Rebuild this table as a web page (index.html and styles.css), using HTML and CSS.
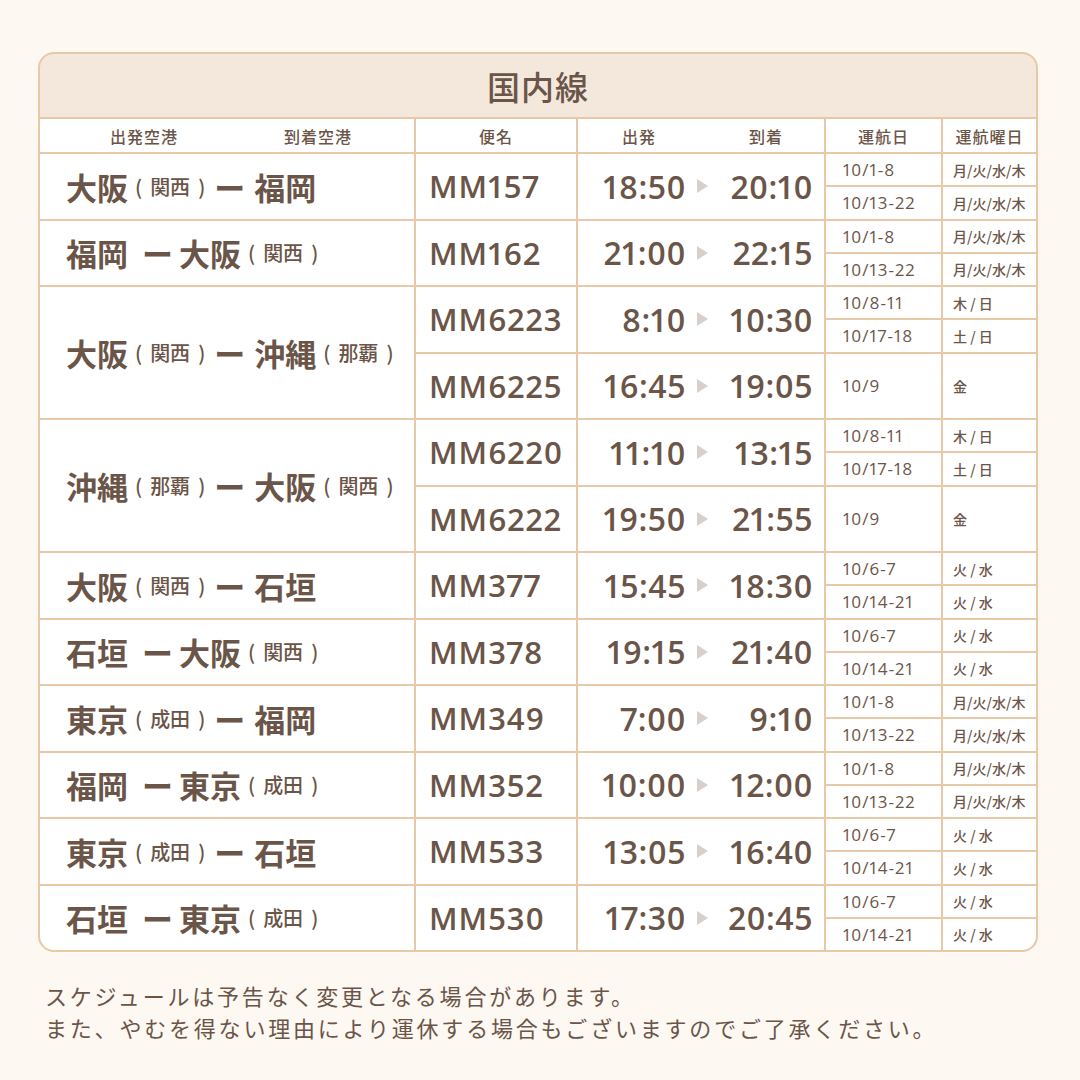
FILE: index.html
```html
<!DOCTYPE html>
<html lang="ja">
<head>
<meta charset="utf-8">
<title>国内線</title>
<link rel="stylesheet" href="styles.css">
</head>
<body>
<div class="page">
  <div class="board">
    <div class="title">国内線</div>
    <div class="grid">
      <div class="cell h h-route"><span>出発空港</span><span>到着空港</span></div>
      <div class="cell h">便名</div>
      <div class="cell h h-time"><span>出発</span><span>到着</span></div>
      <div class="cell h">運航日</div>
      <div class="cell h">運航曜日</div>

      <!-- 1 -->
      <div class="cell route">大阪<span class="sub">(<span class="kw">関西</span>)</span><span class="dash">ー</span>福岡</div>
      <div class="cell flt">MM157</div>
      <div class="cell time"><span class="dep">18:50</span><span class="tri"></span><span class="arr">20:10</span></div>
      <div class="cell date">10/1-8</div><div class="cell days">月/火/水/木</div>
      <div class="cell date">10/13-22</div><div class="cell days">月/火/水/木</div>

      <!-- 2 -->
      <div class="cell route">福岡<span class="dash">ー</span>大阪<span class="sub">(<span class="kw">関西</span>)</span></div>
      <div class="cell flt">MM162</div>
      <div class="cell time"><span class="dep">21:00</span><span class="tri"></span><span class="arr">22:15</span></div>
      <div class="cell date">10/1-8</div><div class="cell days">月/火/水/木</div>
      <div class="cell date">10/13-22</div><div class="cell days">月/火/水/木</div>

      <!-- 3 -->
      <div class="cell route tall">大阪<span class="sub">(<span class="kw">関西</span>)</span><span class="dash">ー</span>沖縄<span class="sub">(<span class="kw">那覇</span>)</span></div>
      <div class="cell flt">MM6223</div>
      <div class="cell time"><span class="dep">8:10</span><span class="tri"></span><span class="arr">10:30</span></div>
      <div class="cell date">10/8-11</div><div class="cell days">木 / 日</div>
      <div class="cell date">10/17-18</div><div class="cell days">土 / 日</div>
      <div class="cell flt">MM6225</div>
      <div class="cell time"><span class="dep">16:45</span><span class="tri"></span><span class="arr">19:05</span></div>
      <div class="cell date two">10/9</div><div class="cell days two">金</div>

      <!-- 4 -->
      <div class="cell route tall">沖縄<span class="sub">(<span class="kw">那覇</span>)</span><span class="dash">ー</span>大阪<span class="sub">(<span class="kw">関西</span>)</span></div>
      <div class="cell flt">MM6220</div>
      <div class="cell time"><span class="dep">11:10</span><span class="tri"></span><span class="arr">13:15</span></div>
      <div class="cell date">10/8-11</div><div class="cell days">木 / 日</div>
      <div class="cell date">10/17-18</div><div class="cell days">土 / 日</div>
      <div class="cell flt">MM6222</div>
      <div class="cell time"><span class="dep">19:50</span><span class="tri"></span><span class="arr">21:55</span></div>
      <div class="cell date two">10/9</div><div class="cell days two">金</div>

      <!-- 5 -->
      <div class="cell route">大阪<span class="sub">(<span class="kw">関西</span>)</span><span class="dash">ー</span>石垣</div>
      <div class="cell flt">MM377</div>
      <div class="cell time"><span class="dep">15:45</span><span class="tri"></span><span class="arr">18:30</span></div>
      <div class="cell date">10/6-7</div><div class="cell days">火 / 水</div>
      <div class="cell date">10/14-21</div><div class="cell days">火 / 水</div>

      <!-- 6 -->
      <div class="cell route">石垣<span class="dash">ー</span>大阪<span class="sub">(<span class="kw">関西</span>)</span></div>
      <div class="cell flt">MM378</div>
      <div class="cell time"><span class="dep">19:15</span><span class="tri"></span><span class="arr">21:40</span></div>
      <div class="cell date">10/6-7</div><div class="cell days">火 / 水</div>
      <div class="cell date">10/14-21</div><div class="cell days">火 / 水</div>

      <!-- 7 -->
      <div class="cell route">東京<span class="sub">(<span class="kw">成田</span>)</span><span class="dash">ー</span>福岡</div>
      <div class="cell flt">MM349</div>
      <div class="cell time"><span class="dep">7:00</span><span class="tri"></span><span class="arr">9:10</span></div>
      <div class="cell date">10/1-8</div><div class="cell days">月/火/水/木</div>
      <div class="cell date">10/13-22</div><div class="cell days">月/火/水/木</div>

      <!-- 8 -->
      <div class="cell route">福岡<span class="dash">ー</span>東京<span class="sub">(<span class="kw">成田</span>)</span></div>
      <div class="cell flt">MM352</div>
      <div class="cell time"><span class="dep">10:00</span><span class="tri"></span><span class="arr">12:00</span></div>
      <div class="cell date">10/1-8</div><div class="cell days">月/火/水/木</div>
      <div class="cell date">10/13-22</div><div class="cell days">月/火/水/木</div>

      <!-- 9 -->
      <div class="cell route">東京<span class="sub">(<span class="kw">成田</span>)</span><span class="dash">ー</span>石垣</div>
      <div class="cell flt">MM533</div>
      <div class="cell time"><span class="dep">13:05</span><span class="tri"></span><span class="arr">16:40</span></div>
      <div class="cell date">10/6-7</div><div class="cell days">火 / 水</div>
      <div class="cell date">10/14-21</div><div class="cell days">火 / 水</div>

      <!-- 10 -->
      <div class="cell route">石垣<span class="dash">ー</span>東京<span class="sub">(<span class="kw">成田</span>)</span></div>
      <div class="cell flt">MM530</div>
      <div class="cell time"><span class="dep">17:30</span><span class="tri"></span><span class="arr">20:45</span></div>
      <div class="cell date">10/6-7</div><div class="cell days">火 / 水</div>
      <div class="cell date">10/14-21</div><div class="cell days">火 / 水</div>
    </div>
  </div>
  <div class="note">
    <p>スケジュールは予告なく変更となる場合があります。</p>
    <p>また、やむを得ない理由により運休する場合もございますのでご了承ください。</p>
  </div>
</div>
</body>
</html>
```

FILE: styles.css
```css
html, body {
  margin: 0;
  padding: 0;
}
body {
  background: #fdf8f2;
  color: #6b5548;
  font-family: "Noto Sans CJK JP", "Noto Sans", sans-serif;
}
.page {
  padding: 52px 0 0 38px;
}
.board {
  width: 1000px;
  box-sizing: border-box;
  border: 2px solid #e7c8a7;
  border-radius: 16px;
  overflow: hidden;
  background: #e7c8a7;
}
.title {
  height: 63px;
  background: #f4e8dd;
  border-bottom: 2px solid #e7c8a7;
  display: flex;
  align-items: center;
  justify-content: center;
  font-size: 33px;
  font-weight: 500;
  letter-spacing: 1px;
}
.grid {
  display: grid;
  grid-template-columns: 374px 160px 246px 115px 93px;
  grid-template-rows: 33px repeat(24, 1fr);
  height: 831px;
  gap: 2px;
}
.cell {
  background: #ffffff;
  display: flex;
  align-items: center;
  min-width: 0;
  white-space: nowrap;
}
.h {
  justify-content: center;
  font-size: 16px;
  font-weight: 500;
  letter-spacing: 1px;
}
.h-route {
  justify-content: space-between;
  padding: 0 62px 0 70px;
}
.h-time {
  justify-content: space-between;
  padding: 0 41px 0 44px;
}
.route {
  grid-row: span 2;
  padding-left: 26px;
  font-size: 31px;
  font-weight: 700;
}
.route.tall {
  grid-row: span 4;
}
.sub {
  font-size: 20px;
  font-weight: 500;
  margin-left: 7px;
}
.kw {
  margin: 0 8px;
}
.dash {
  margin: 0 6px 0 14px;
}
.sub + .dash {
  margin-left: 9px;
  margin-right: 9px;
}
.flt {
  grid-row: span 2;
  padding-left: 13px;
  font-family: "Open Sans", sans-serif;
  font-variant-numeric: proportional-nums;
  font-size: 31px;
  font-weight: 600;
  letter-spacing: 1px;
}
.time {
  grid-row: span 2;
  display: grid;
  grid-template-columns: 108px 33px 1fr;
  align-items: center;
  padding-right: 11px;
  font-family: "Open Sans", sans-serif;
  font-variant-numeric: proportional-nums;
  font-size: 32px;
  font-weight: 600;
  letter-spacing: 0.5px;
}
.dep, .arr {
  text-align: right;
}
.tri {
  justify-self: center;
  width: 0;
  height: 0;
  border-left: 11px solid #d6cfcb;
  border-top: 7px solid transparent;
  border-bottom: 7px solid transparent;
}
.date {
  padding-left: 17px;
  font-family: "Open Sans", sans-serif;
  font-variant-numeric: proportional-nums;
  font-size: 17px;
  font-weight: 500;
  letter-spacing: 1px;
}
.days {
  padding-left: 10px;
  font-size: 14px;
  font-weight: 500;
}
.two {
  grid-row: span 2;
}
.note {
  margin: 27px 0 0 7px;
  font-size: 22px;
  letter-spacing: 2.8px;
  line-height: 32px;
}
.note p {
  margin: 0;
}
```
